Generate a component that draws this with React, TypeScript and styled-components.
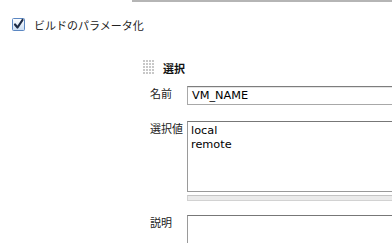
import styled, { createGlobalStyle } from 'styled-components';

const GlobalStyle = createGlobalStyle`
  html, body {
    margin: 0;
    padding: 0;
    background: #ffffff;
    overflow: hidden;
  }
  body {
    font-family: 'DejaVu Sans', Verdana, 'Noto Sans CJK JP', sans-serif;
    font-size: 11px;
    color: #000;
  }
`;

const Page = styled.div`
  width: 392px;
  height: 243px;
  overflow: hidden;
`;

const TopRule = styled.div`
  margin-left: 132px;
  height: 2px;
  background: #b5b5b5;
`;

const OptionRow = styled.label`
  display: flex;
  align-items: center;
  gap: 9px;
  margin: 16px 0 0 12px;
  height: 13px;
  font-family: 'Noto Sans CJK JP', sans-serif;
  font-size: 11px;
  color: #222;
`;

const Section = styled.div`
  margin: 29px 0 0 143px;
`;

const SectionHeader = styled.div`
  display: flex;
  align-items: center;
  gap: 8px;
  height: 15px;
`;

const Title = styled.span`
  font-family: 'Noto Sans CJK JP', sans-serif;
  font-weight: 700;
  font-size: 11px;
  color: #111;
`;

const Form = styled.div`
  display: grid;
  grid-template-columns: 37px 1fr;
  margin-top: 11px;
  padding-left: 7px;
`;

const Label = styled.div<{ $gap?: number }>`
  font-family: 'Noto Sans CJK JP', sans-serif;
  font-size: 11px;
  line-height: 13px;
  padding-top: 1px;
  margin-top: ${(p) => p.$gap ?? 0}px;
  color: #222;
  white-space: nowrap;
`;

const Field = styled.div<{ $gap?: number }>`
  margin-top: ${(p) => p.$gap ?? 0}px;
`;

const TextInput = styled.div`
  box-sizing: border-box;
  width: 260px;
  height: 19px;
  border: 1px solid #a8a8a8;
  border-top-color: #7d7d7d;
  padding: 2px 4px;
  line-height: 13px;
  font-size: 11.3px;
  box-shadow: inset 0 1px 0 #e4e4e4;
`;

const TextArea = styled.div<{ $height: number }>`
  box-sizing: border-box;
  width: 260px;
  height: ${(p) => p.$height}px;
  border: 1px solid #9a9a9a;
  border-top-color: #777;
  padding: 2px 3px;
  line-height: 14px;
  font-size: 11.3px;
  white-space: pre;
`;

const ResizeBar = styled.div`
  box-sizing: border-box;
  width: 260px;
  height: 6px;
  margin-top: 3px;
  background: #ebebeb;
  border: 1px solid #d2d2d2;
  border-top-color: #c4c4c4;
`;

const CheckIcon = () => (
  <svg width="13" height="13" viewBox="0 0 13 13">
    <defs>
      <linearGradient id="cbFill" x1="0" y1="0" x2="0" y2="1">
        <stop offset="0" stopColor="#ffffff" />
        <stop offset="1" stopColor="#c9dcf2" />
      </linearGradient>
    </defs>
    <rect x="0.5" y="0.5" width="12" height="12" rx="1" fill="url(#cbFill)" stroke="#5b87c2" />
    <path d="M3 6.5 L5.5 9.5 L10.5 2" fill="none" stroke="#1d2b45" strokeWidth="2.2" strokeLinecap="round" strokeLinejoin="round" />
  </svg>
);

const DragHandle = () => {
  const dots = [];
  for (let r = 0; r < 5; r++) {
    for (let c = 0; c < 4; c++) {
      dots.push(<rect key={`${r}-${c}`} x={c * 3} y={r * 3} width="2" height="2" fill="#c8c8c8" />);
    }
  }
  return (
    <svg width="12" height="15" viewBox="0 0 12 15">
      {dots}
    </svg>
  );
};

const App = () => {
  return (
    <>
      <GlobalStyle />
      <Page>
        <TopRule />
        <OptionRow>
          <CheckIcon />
          ビルドのパラメータ化
        </OptionRow>
        <Section>
          <SectionHeader>
            <DragHandle />
            <Title>選択</Title>
          </SectionHeader>
          <Form>
            <Label>名前</Label>
            <Field>
              <TextInput>VM_NAME</TextInput>
            </Field>
            <Label $gap={16}>選択値</Label>
            <Field $gap={16}>
              <TextArea $height={71}>{'local\nremote'}</TextArea>
              <ResizeBar />
            </Field>
            <Label $gap={14}>説明</Label>
            <Field $gap={14}>
              <TextArea $height={60} />
            </Field>
          </Form>
        </Section>
      </Page>
    </>
  );
};

export default App;
